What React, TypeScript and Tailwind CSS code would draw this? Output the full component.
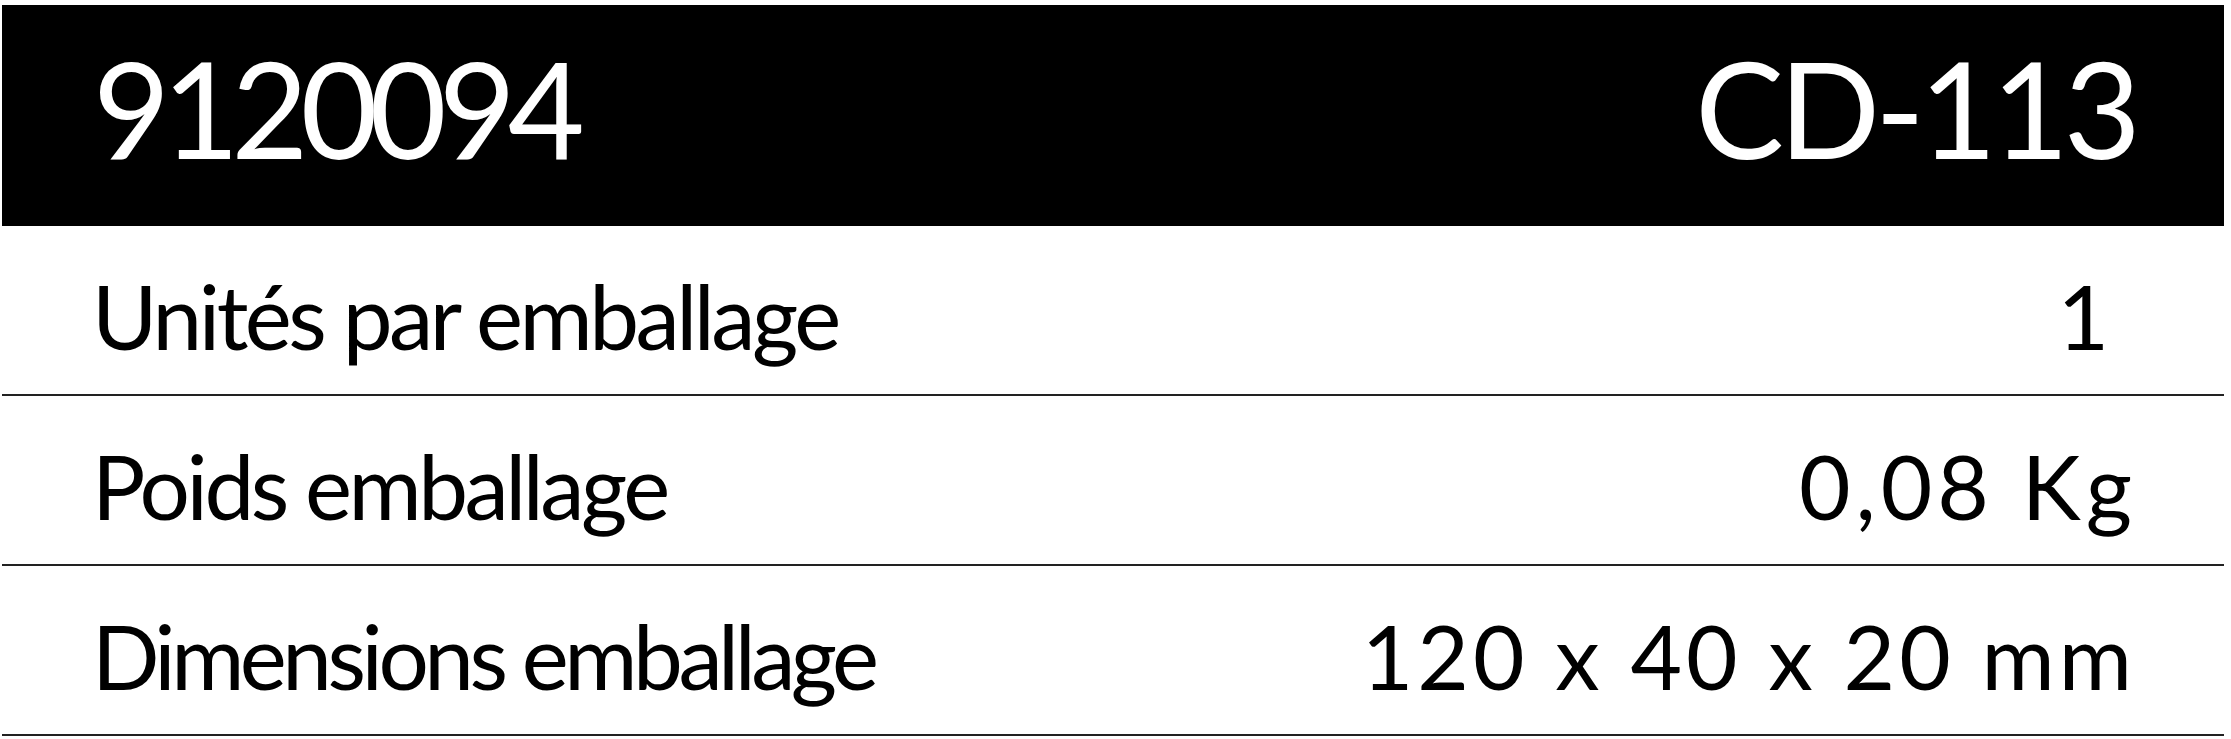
export default function App() {
  const rows: { k: string; v: string; kt: string; vt: string; vm: string }[] = [
    { k: "Unités par emballage", v: "1", kt: "tracking-[-3.5px]", vt: "tracking-[0px]", vm: "mr-[23px]" },
    { k: "Poids emballage", v: "0,08 Kg", kt: "tracking-[-3.5px]", vt: "tracking-[5px]", vm: "mr-[-5px]" },
    { k: "Dimensions emballage", v: "120 x 40 x 20 mm", kt: "tracking-[-4.5px]", vt: "tracking-[4px]", vm: "mr-[-4px]" },
  ];
  return (
    <div className="w-[2231px] h-[739px] bg-white pt-[5px] pl-[2px]" style={{ fontFamily: "Lato, 'Noto Sans', sans-serif" }}>
      <div className="w-[2222px]">
        <div className="h-[221px] bg-black text-white flex items-center justify-between pl-[91px] pr-[86px] pb-[16px]">
          <span className="text-[133px] leading-none tracking-[-8px]">9120094</span>
          <span className="text-[133px] leading-none tracking-[-5px] mr-[2px]">CD-113</span>
        </div>
        {rows.map((r) => (
          <div key={r.k} className="h-[170px] border-b-2 border-[#222] flex items-center justify-between pl-[90px] pr-[92px] pt-[10px] text-black">
            <span className={`text-[89px] leading-none ${r.kt}`}>{r.k}</span>
            <span className={`text-[89px] leading-none ${r.vt} ${r.vm}`}>{r.v}</span>
          </div>
        ))}
      </div>
    </div>
  );
}
